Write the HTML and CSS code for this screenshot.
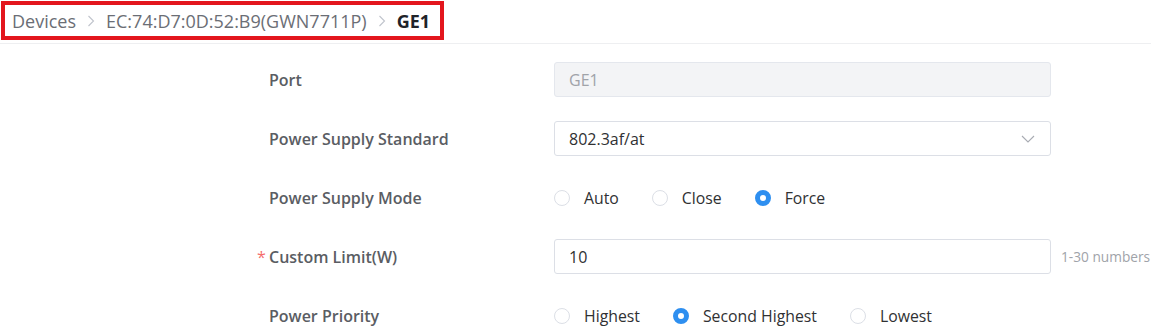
FILE: index.html
```html
<!DOCTYPE html>
<html lang="en">
<head>
    <meta charset="UTF-8">
    <meta name="viewport" content="width=device-width, initial-scale=1.0">
    <title>GE1 - Port Settings</title>
    <link rel="stylesheet" href="styles.css">
</head>
<body>
    <div class="top-bar">
        <div class="crumbs">
            <span class="crumb">Devices</span>
            <svg class="sep" viewBox="0 0 8 12" width="8" height="12"><path d="M1.5 1 L6.5 6 L1.5 11" fill="none" stroke="#c0c4cc" stroke-width="1.1"/></svg>
            <span class="crumb">EC:74:D7:0D:52:B9(GWN7711P)</span>
            <svg class="sep" viewBox="0 0 8 12" width="8" height="12"><path d="M1.5 1 L6.5 6 L1.5 11" fill="none" stroke="#c0c4cc" stroke-width="1.1"/></svg>
            <span class="crumb current">GE1</span>
        </div>
    </div>

    <form class="port-form">
        <label class="field-label">Port</label>
        <div class="field-control">
            <div class="text-box disabled">GE1</div>
        </div>
        <div class="field-hint"></div>

        <label class="field-label">Power Supply Standard</label>
        <div class="field-control">
            <div class="text-box select-box">
                <span>802.3af/at</span>
                <svg class="arrow" viewBox="0 0 14 8" width="14" height="8"><path d="M1 1 L7 7 L13 1" fill="none" stroke="#a8abb2" stroke-width="1.1"/></svg>
            </div>
        </div>
        <div class="field-hint"></div>

        <label class="field-label">Power Supply Mode</label>
        <div class="field-control radio-group">
            <span class="radio"><i class="dot"></i>Auto</span>
            <span class="radio"><i class="dot"></i>Close</span>
            <span class="radio"><i class="dot checked"></i>Force</span>
        </div>
        <div class="field-hint"></div>

        <label class="field-label required">Custom Limit(W)</label>
        <div class="field-control">
            <div class="text-box">10</div>
        </div>
        <div class="field-hint">1-30 numbers</div>

        <label class="field-label">Power Priority</label>
        <div class="field-control radio-group">
            <span class="radio"><i class="dot"></i>Highest</span>
            <span class="radio"><i class="dot checked"></i>Second Highest</span>
            <span class="radio"><i class="dot"></i>Lowest</span>
        </div>
        <div class="field-hint"></div>
    </form>
</body>
</html>
```

FILE: styles.css
```css
:root {
    --text-color: #303133;
    --label-color: #5a5d63;
    --muted-color: #909399;
    --border-color: #dcdfe6;
    --primary-color: #2e8ff0;
    --mark-color: #e3161d;
}

* {
    margin: 0;
    padding: 0;
    box-sizing: border-box;
}

body {
    font-family: "Open Sans", "Noto Sans", sans-serif;
    background: #fff;
    color: var(--text-color);
    overflow: hidden;
}

/* breadcrumb bar */
.top-bar {
    height: 44px;
    border-bottom: 1px solid #eeeff1;
    padding: 1px 0 0 1px;
}

.crumbs {
    display: inline-flex;
    align-items: center;
    height: 39px;
    width: 443px;
    padding-left: 7px;
    border: 4px solid var(--mark-color);
    font-size: 18px;
}

.crumb {
    color: #6b6e75;
}

.crumb.current {
    color: #1f2329;
    font-weight: 700;
}

.sep {
    margin: 0 11px 0 11px;
}

/* form */
.port-form {
    display: grid;
    grid-template-columns: 285px 497px auto;
    grid-auto-rows: 35px;
    row-gap: 24px;
    align-items: center;
    margin: 18px 0 0 269px;
}

.field-label {
    position: relative;
    font-size: 16px;
    font-weight: 600;
    color: var(--label-color);
}

.field-label.required::before {
    content: "*";
    position: absolute;
    left: -12px;
    top: 0;
    color: #f56c6c;
    font-weight: 400;
}

.field-control {
    height: 35px;
}

.text-box {
    height: 35px;
    display: flex;
    align-items: center;
    padding: 0 14px;
    border: 1px solid var(--border-color);
    border-radius: 3px;
    font-size: 16px;
    color: var(--text-color);
}

.text-box.disabled {
    background: #f3f4f6;
    border-color: #e4e7ed;
    color: #a0a3a9;
}

.select-box {
    justify-content: space-between;
}

.arrow {
    margin-right: 1px;
}

.radio-group {
    display: flex;
    align-items: center;
    gap: 33px;
}

.radio {
    display: inline-flex;
    align-items: center;
    font-size: 15.8px;
    color: var(--text-color);
}

.dot {
    width: 16px;
    height: 16px;
    margin-right: 14px;
    border: 1px solid var(--border-color);
    border-radius: 50%;
    background: #fff;
}

.dot.checked {
    border: 5px solid var(--primary-color);
    background: #fff;
}

.field-hint {
    padding-left: 10px;
    font-size: 13.7px;
    color: #a0a3a9;
    white-space: nowrap;
}
```
